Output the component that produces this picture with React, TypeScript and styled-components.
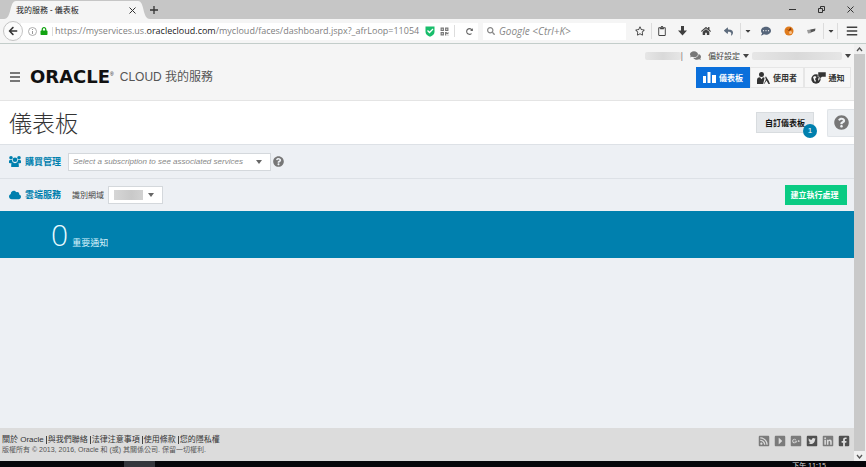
import React from 'react';
import styled, { createGlobalStyle, css } from 'styled-components';
import {
  FaArrowLeft, FaLock, FaRedoAlt, FaSearch, FaRegStar, FaRegClipboard, FaHome,
  FaReply, FaCommentDots, FaComments, FaCloud, FaQuestionCircle, FaBars,
  FaRssSquare, FaCaretSquareRight, FaGooglePlusSquare, FaTwitterSquare, FaLinkedin, FaFacebookSquare,
  FaQrcode, FaCaretDown,
} from 'react-icons/fa';

const cjk = '"Noto Sans CJK TC", sans-serif';

const Global = createGlobalStyle`
  *, *::before, *::after { box-sizing: border-box; }
  body { margin: 0; font: 8px/12px "Liberation Sans", ${cjk}; color: #333; background: #edf0f4; }
  button, input, select { font: inherit; color: inherit; margin: 0; padding: 0; border: 0; background: none; border-radius: 0; }
  button { cursor: pointer; display: inline-flex; align-items: center; justify-content: center; }
  svg { display: block; flex: none; }
  a { color: inherit; text-decoration: none; }
  h1, h2, p { margin: 0; font: inherit; }
`;

const Window = styled.div`
  display: flex;
  flex-direction: column;
  height: 100vh;
  overflow: hidden;
`;

/* ---------- browser chrome ---------- */
const TabStrip = styled.div`
  display: flex;
  height: 19px;
  flex: none;
  padding-left: 4px;
  background: #c6c6c6;
`;
const TabEdge = styled.svg`
  width: 12px;
  height: 19px;
`;
const Tab = styled.div`
  display: flex;
  align-items: center;
  justify-content: space-between;
  width: 122px;
  padding-right: 2px;
  margin-top: 1px;
  background: #f5f5f5;
  color: #222;
  font-family: "Noto Sans", ${cjk};
  white-space: nowrap;
`;
const ChromeButton = styled.button<{ $w: number }>`
  width: ${(p) => p.$w}px;
  height: 19px;
  color: #333;
`;
const WindowButtons = styled.div`
  display: flex;
  margin-left: auto;
  padding-right: 1px;
`;
const Toolbar = styled.div`
  display: flex;
  align-items: center;
  height: 25px;
  flex: none;
  background: #f5f5f5;
  border-bottom: 1px solid #c3cdca;
`;
const BackButton = styled.button`
  z-index: 1;
  width: 20px;
  height: 20px;
  margin: 0 -2px 0 3px;
  border: 1px solid #c4c4c4;
  border-radius: 50%;
  background: #fbfbfb;
  color: #333;
`;
const AddressBar = styled.div`
  display: flex;
  align-items: center;
  flex: 1;
  min-width: 0;
  height: 17px;
  padding-left: 7px;
  background: #fff;
`;
const SiteIcons = styled.div`
  display: flex;
  align-items: center;
  gap: 3px;
  width: 25px;
  flex: none;
  border-right: 1px solid #ddd;
`;
const Url = styled.p`
  flex: 1;
  min-width: 0;
  padding-left: 2px;
  margin-right: 4px;
  overflow: hidden;
  white-space: nowrap;
  font: 9px/16px "Open Sans", "Noto Sans", sans-serif;
  color: #808080;
  b { font-weight: 400; color: #222; }
`;
const AddressActions = styled.div`
  display: flex;
  align-items: center;
  gap: 5px;
  color: #777;
`;
const Rule = styled.span`
  width: 1px;
  height: 12px;
  background: #ddd;
`;
const SearchBox = styled.label`
  display: flex;
  align-items: center;
  gap: 4px;
  width: 143px;
  height: 17px;
  margin: 0 2px 0 5px;
  padding-left: 4px;
  background: #fff;
  color: #888;
  input {
    flex: 1;
    min-width: 0;
    outline: 0;
    font: italic 10px/16px "Open Sans", "Noto Sans", sans-serif;
  }
  input::placeholder { color: #888; opacity: 1; }
`;
const Tool = styled.button<{ $w?: number; $rule?: boolean; $color?: string }>`
  width: ${(p) => p.$w ?? 23}px;
  height: 16px;
  flex: none;
  color: ${(p) => p.$color ?? '#404040'};
  ${(p) => p.$rule && css`border-left: 1px solid #dcdcdc;`}
`;

/* ---------- page ---------- */
const Viewport = styled.div`
  display: flex;
  flex: 1;
  min-height: 0;
`;
const Page = styled.div`
  display: flex;
  flex-direction: column;
  flex: 1;
  min-width: 0;
  background: #edf0f4;
`;
const ScrollTrack = styled.div`
  display: flex;
  flex-direction: column;
  width: 12px;
  flex: none;
  padding-right: 1px;
  background: #f0f0f0;
  color: #555;
  button { height: 10px; }
`;
const ScrollThumb = styled.div`
  flex: 1;
  background: #c9c9c9;
`;
const Header = styled.header`
  flex: none;
  height: 57px;
  padding: 0 3px 0 9px;
  background: #f5f5f5;
  border-bottom: 1px solid #e4e4e4;
`;
const Utility = styled.div`
  display: flex;
  align-items: center;
  justify-content: flex-end;
  gap: 3px;
  height: 23px;
  font-family: ${cjk};
  color: #444;
`;
const Account = styled.span`
  display: flex;
  align-items: center;
  margin-right: 4px;
`;
const UtilityButton = styled.button`
  gap: 3px;
`;
const ChatButton = styled.button`
  margin-right: 4px;
  color: #777;
`;
const Smudge = styled.span<{ $w: number }>`
  width: ${(p) => p.$w}px;
  height: 8px;
  border-radius: 2px;
  background: linear-gradient(90deg, #e6e6e6, #d9d9d9 50%, #e6e6e6);
`;
const Masthead = styled.div`
  display: flex;
  align-items: center;
  justify-content: space-between;
  height: 21px;
`;
const Brand = styled.div`
  display: flex;
  align-items: center;
  padding-bottom: 2px;
  white-space: nowrap;
  font: 12px/20px "Liberation Sans", ${cjk};
  color: #555;
`;
const MenuButton = styled.button`
  width: 11px;
  height: 16px;
  margin-right: 10px;
  color: #777;
`;
const Logo = styled.span`
  margin-right: 6px;
  font: 700 18px/20px "DejaVu Sans", sans-serif;
  color: #111;
  sup { font: 5px/5px "Liberation Sans", sans-serif; vertical-align: 7px; }
`;
const Nav = styled.nav`
  display: flex;
`;
const NavLink = styled.a<{ $active?: boolean; $w: number }>`
  display: flex;
  align-items: center;
  justify-content: center;
  gap: 3px;
  width: ${(p) => p.$w}px;
  height: 21px;
  border: 1px solid ${(p) => (p.$active ? '#0a6fdb' : '#e6e6e6')};
  background: ${(p) => (p.$active ? '#0a6fdb' : '#f7f7f7')};
  color: ${(p) => (p.$active ? '#fff' : '#333')};
  font-family: ${cjk};
  font-weight: 700;
`;
const TitleBar = styled.div`
  display: flex;
  align-items: center;
  flex: none;
  height: 43px;
  padding-left: 9px;
  background: #fff;
  h1 { flex: 1; padding-bottom: 2px; font: 300 23px/32px ${cjk}; color: #333; }
`;
const Customize = styled.button`
  position: relative;
  width: 58px;
  height: 21px;
  margin-right: 13px;
  background: #e6e9ec;
  border: 1px solid #d8dcdf;
  color: #111;
  font: 700 8px/12px ${cjk};
`;
const Badge = styled.span`
  position: absolute;
  right: -4px;
  bottom: -6px;
  width: 14px;
  height: 14px;
  border-radius: 50%;
  background: #0080ae;
  color: #fff;
  font: 8px/14px "Liberation Sans", sans-serif;
`;
const HelpPanel = styled.button`
  width: 27px;
  height: 28px;
  background: #edf0f3;
  border: 1px solid #e0e4e8;
  border-right: 0;
  border-radius: 2px 0 0 2px;
  color: #777;
`;
const FilterRow = styled.section<{ $h: number }>`
  display: flex;
  align-items: center;
  flex: none;
  height: ${(p) => p.$h}px;
  padding: 0 7px 0 9px;
  border-top: 1px solid #dde1e6;
  font-family: ${cjk};
`;
const RowTitle = styled.h2`
  display: flex;
  align-items: center;
  gap: 4px;
  margin-right: 7px;
  color: #0080ae;
  font: 700 9px/14px ${cjk};
`;
const FieldLabel = styled.label`
  margin: 0 4px;
  color: #444;
`;
const SelectBox = styled.div<{ $w: number }>`
  display: grid;
  align-items: center;
  width: ${(p) => p.$w}px;
  height: 18px;
  background: #fff;
  border: 1px solid #d4d8dc;
  color: #666;
  > * { grid-area: 1 / 1; }
  > svg { justify-self: end; margin-right: 8px; pointer-events: none; }
  select {
    appearance: none;
    width: 100%;
    height: 16px;
    padding-left: 4px;
    outline: 0;
    color: #888;
    font: italic 8px/14px "Liberation Sans", sans-serif;
  }
`;
const Redacted = styled.span`
  width: 29px;
  height: 10px;
  margin-left: 5px;
  background: linear-gradient(90deg, #d6d6d6, #c9c9c9 60%, #d2d2d2);
  pointer-events: none;
`;
const HelpButton = styled.button`
  margin-left: 2px;
  color: #777;
`;
const CreateButton = styled.button`
  width: 62px;
  height: 20px;
  margin-left: auto;
  padding-right: 3px;
  background: #0acb83;
  color: #fff;
  font: 700 8px/12px ${cjk};
`;
const Notice = styled.section`
  display: flex;
  align-items: baseline;
  gap: 4px;
  flex: none;
  height: 47px;
  padding-left: 51px;
  background: #0080ae;
  color: #d9f3fc;
  font: 9px/47px ${cjk};
  strong { font: 300 30px/47px "Open Sans", sans-serif; color: #e8fbff; }
`;
const Footer = styled.footer`
  display: flex;
  justify-content: space-between;
  flex: none;
  height: 33px;
  margin-top: auto;
  padding: 6px 4px 0 2px;
  background: #dcdcdc;
  color: #444;
`;
const FooterLinks = styled.p`
  display: flex;
  line-height: 11px;
  color: #333;
`;
const FooterLink = styled.a`
  & + & {
    margin-left: 2px;
    padding-left: 2px;
    background: linear-gradient(#444, #444) left center / 1px 8px no-repeat;
  }
`;
const Copyright = styled.p`
  font-size: 7px;
  line-height: 9px;
  color: #555;
`;
const Social = styled.div`
  display: flex;
  gap: 4px;
  padding-top: 1px;
`;
const SocialLink = styled.a<{ $dark?: boolean }>`
  color: ${(p) => (p.$dark ? '#505050' : '#7b7b7b')};
`;
const Taskbar = styled.div`
  display: flex;
  justify-content: space-between;
  height: 6px;
  flex: none;
  padding: 0 40px 0 124px;
  overflow: hidden;
  background: #06060a;
  color: #ddd;
`;
const TaskItem = styled.span`
  width: 31px;
  background: #34363c;
`;
const Clock = styled.span`
  font: 7px/10px "Noto Sans", ${cjk};
`;

const Caret = () => (
  <svg width="6" height="4" viewBox="0 0 6 4" aria-hidden="true"><path d="M0 0h6L3 4z" fill="currentColor" /></svg>
);
const Chevron = ({ up }: { up?: boolean }) => (
  <svg width="7" height="5" viewBox="0 0 7 5" fill="none" stroke="currentColor" strokeWidth="1.3" aria-hidden="true">
    <path d={up ? 'M1 4l2.5-3L6 4' : 'M1 1l2.5 3L6 1'} />
  </svg>
);
const Shield = () => (
  <svg width="10" height="11" viewBox="0 0 10 11" aria-hidden="true">
    <path d="M.5.5h9V6C9.500 8.500 7 10 5 10.700 3 10 .5 8.500.5 6z" fill="#18bd6b" />
    <path d="M2.500 4.500 4.500 6.500 8 3" fill="none" stroke="#fff" strokeWidth="1.300" />
  </svg>
);
const Download = () => (
  <svg width="9" height="10" viewBox="0 0 9 10" fill="currentColor" aria-hidden="true">
    <path d="M3 0h3v4.500h3L4.500 9.500 0 4.500h3z" />
  </svg>
);
const Bars = () => (
  <svg width="13" height="11" viewBox="0 0 13 11" fill="currentColor" aria-hidden="true">
    <path d="M0 4h3v7H0zM4.500 0h3v11h-3zM9 3h4v8H9z" />
  </svg>
);
const Group = () => (
  <svg width="12" height="11" viewBox="0 0 12 11" fill="currentColor" aria-hidden="true">
    <circle cx="2" cy="1.800" r="1.800" />
    <circle cx="10" cy="1.800" r="1.800" />
    <circle cx="6" cy="3.800" r="2.300" />
    <path d="M0 7V5.200C0 4.300.6 4 1.500 4h1.600c0 1.200.5 2 1.200 2.700L3 7.500zM12 7V5.200C12 4.300 11.400 4 10.500 4H8.900c0 1.200-.5 2-1.200 2.700L9 7.500z" />
    <path d="M2.200 11V8.800c0-1.400 1-2.200 2.200-2.200.9.700 2.300.7 3.200 0 1.200 0 2.200.8 2.200 2.200V11z" />
  </svg>
);
const UserEdit = () => (
  <svg width="13" height="12" viewBox="0 0 13 12" fill="currentColor" aria-hidden="true">
    <circle cx="4.500" cy="2.500" r="2.500" />
    <path d="M0 12V8c0-2 1.500-2.700 3-2.700l1.500 2 1.500-2c.7 0 1.200.2 1.600.5L6.200 12z" />
    <path d="M9 4.500 11.800 9 13 12h-1.500L9.500 8.500 7.200 12H6.800L8.900 7.400 8.200 5z" />
  </svg>
);
const GlobeFlag = () => (
  <svg width="15" height="12" viewBox="0 0 15 12" aria-hidden="true">
    <circle cx="5" cy="7" r="4.700" fill="#333" />
    <path d="M2 5l2-1 1.500 1L4 7l1 2-1 1-1-2zM7 6l1.500 1-1 2z" fill="#f7f7f7" />
    <path d="M7 0h8v5h-4L8.500 7V5H7z" fill="#333" stroke="#f7f7f7" strokeWidth=".5" />
  </svg>
);
const Restore = () => (
  <svg width="7" height="7" viewBox="0 0 7 7" fill="none" stroke="currentColor" aria-hidden="true">
    <path d="M.5 2.500h4v4h-4zM2.500 2V.5h4v4H5" />
  </svg>
);
const Cross = ({ size }: { size: number }) => (
  <svg width={size} height={size} viewBox="0 0 7 7" stroke="currentColor" aria-hidden="true"><path d="M.5.5l6 6M6.500.5l-6 6" /></svg>
);
const Fox = () => (
  <svg width="10" height="10" viewBox="0 0 10 10" aria-hidden="true">
    <circle cx="5" cy="5" r="4.500" fill="#e07b1c" />
    <path d="M1.500 2.500l3 1.500 2-2.500 1 2-2.500 1.500z" fill="#8a3d0c" />
    <circle cx="6.500" cy="6.500" r="1.500" fill="#f6c08a" />
  </svg>
);
const Pen = () => (
  <svg width="9" height="6" viewBox="0 0 9 6" aria-hidden="true">
    <path d="M0 2l4-.5V5L1 5.500z" fill="#999" /><path d="M3.500 1.500 8.500.5 8 3 4 4.500z" fill="#555" />
  </svg>
);

const links = ['關於 Oracle', '與我們聯絡', '法律注意事項', '使用條款', '您的隱私權'];
const social = [
  { name: 'RSS', Icon: FaRssSquare },
  { name: 'YouTube', Icon: FaCaretSquareRight },
  { name: 'Google+', Icon: FaGooglePlusSquare },
  { name: 'Twitter', Icon: FaTwitterSquare, dark: true },
  { name: 'LinkedIn', Icon: FaLinkedin },
  { name: 'Facebook', Icon: FaFacebookSquare, dark: true },
];

export default function App() {
  return (
    <Window>
      <Global />
      <TabStrip>
        <TabEdge viewBox="0 0 12 19" aria-hidden="true">
          <path d="M0 19C8 19 5 1 12 1v18z" fill="#f5f5f5" />
        </TabEdge>
        <Tab>
          <span>我的服務 - 儀表板</span>
          <ChromeButton $w={8} aria-label="關閉分頁"><Cross size={7} /></ChromeButton>
        </Tab>
        <TabEdge viewBox="0 0 12 19" aria-hidden="true">
          <path d="M12 19C4 19 7 1 0 1v18z" fill="#f5f5f5" />
        </TabEdge>
        <ChromeButton $w={8} aria-label="新增分頁">
          <svg width="8" height="8" viewBox="0 0 8 8" stroke="currentColor" strokeWidth="1.300"><path d="M0 4h8M4 0v8" /></svg>
        </ChromeButton>
        <WindowButtons>
          <ChromeButton $w={29} aria-label="最小化">
            <svg width="7" height="7" viewBox="0 0 7 7" stroke="currentColor"><path d="M0 3.500h7" /></svg>
          </ChromeButton>
          <ChromeButton $w={29} aria-label="還原"><Restore /></ChromeButton>
          <ChromeButton $w={29} aria-label="關閉"><Cross size={7} /></ChromeButton>
        </WindowButtons>
      </TabStrip>

      <Toolbar>
        <BackButton aria-label="上一頁"><FaArrowLeft size={10} /></BackButton>
        <AddressBar>
          <SiteIcons>
            <svg width="9" height="9" viewBox="0 0 9 9" fill="none" stroke="#999" aria-hidden="true">
              <circle cx="4.500" cy="4.500" r="4" strokeWidth=".8" /><path d="M4.500 4v3M4.500 2v1" />
            </svg>
            <FaLock size={8} color="#12a312" />
          </SiteIcons>
          <Url>https://myservices.us.<b>oraclecloud.com</b>/mycloud/faces/dashboard.jspx?_afrLoop=11054</Url>
          <AddressActions>
            <Shield />
            <FaQrcode size={9} />
            <Rule />
            <Tool $w={18} aria-label="重新載入" $color="#666"><FaRedoAlt size={7} /></Tool>
          </AddressActions>
        </AddressBar>
        <SearchBox>
          <FaSearch size={8} />
          <input type="text" placeholder="Google <Ctrl+K>" aria-label="搜尋" />
        </SearchBox>
        <Tool aria-label="書籤"><FaRegStar size={10} /></Tool>
        <Tool $w={20} $rule aria-label="剪貼簿"><FaRegClipboard size={10} /></Tool>
        <Tool aria-label="下載"><Download /></Tool>
        <Tool aria-label="首頁"><FaHome size={10} /></Tool>
        <Tool aria-label="復原" $color="#5d6b7c"><FaReply size={9} /></Tool>
        <Tool $w={14} $rule aria-label="更多"><FaCaretDown size={8} /></Tool>
        <Tool aria-label="交談" $color="#56657a"><FaCommentDots size={10} /></Tool>
        <Tool aria-label="附加元件"><Fox /></Tool>
        <Tool aria-label="工具"><Pen /></Tool>
        <Tool $w={14} $rule aria-label="更多工具"><FaCaretDown size={8} /></Tool>
        <Tool $w={29} $rule aria-label="選單"><FaBars size={12} /></Tool>
      </Toolbar>

      <Viewport>
        <Page>
          <Header>
            <Utility>
              <Account><Smudge $w={36} />|</Account>
              <ChatButton aria-label="交談"><FaComments size={11} /></ChatButton>
              <UtilityButton>偏好設定 <Caret /></UtilityButton>
              <UtilityButton aria-label="帳戶"><Smudge $w={90} /><Caret /></UtilityButton>
            </Utility>
            <Masthead>
              <Brand>
                <MenuButton aria-label="主選單">
                  <svg width="10" height="10" viewBox="0 0 10 10" fill="currentColor"><path d="M0 0h10v2H0zM0 4h10v2H0zM0 8h10v2H0z" /></svg>
                </MenuButton>
                <Logo>ORACLE<sup>®</sup></Logo>
                <span>CLOUD 我的服務</span>
              </Brand>
              <Nav>
                <NavLink href="#dashboard" $active $w={54}><Bars />儀表板</NavLink>
                <NavLink href="#users" $w={54}><UserEdit />使用者</NavLink>
                <NavLink href="#notices" $w={47}><GlobeFlag />通知</NavLink>
              </Nav>
            </Masthead>
          </Header>

          <TitleBar>
            <h1>儀表板</h1>
            <Customize>自訂儀表板<Badge>1</Badge></Customize>
            <HelpPanel aria-label="說明"><FaQuestionCircle size={15} /></HelpPanel>
          </TitleBar>

          <FilterRow $h={34}>
            <RowTitle><Group />購買管理</RowTitle>
            <SelectBox $w={203}>
              <select aria-label="購買管理"><option>Select a subscription to see associated services</option></select>
              <Caret />
            </SelectBox>
            <HelpButton aria-label="購買管理說明"><FaQuestionCircle size={11} /></HelpButton>
          </FilterRow>
          <FilterRow $h={33}>
            <RowTitle><FaCloud size={12} />雲端服務</RowTitle>
            <FieldLabel htmlFor="domain">識別網域</FieldLabel>
            <SelectBox $w={55}>
              <select id="domain"><option></option></select>
              <Redacted />
              <Caret />
            </SelectBox>
            <CreateButton>建立執行處理</CreateButton>
          </FilterRow>

          <Notice><strong>0</strong>重要通知</Notice>

          <Footer>
            <div>
              <FooterLinks>
                {links.map((label) => (
                  <FooterLink key={label} href="#about">{label}</FooterLink>
                ))}
              </FooterLinks>
              <Copyright>版權所有 © 2013, 2016, Oracle 和 (或) 其關係公司. 保留一切權利.</Copyright>
            </div>
            <Social>
              {social.map(({ name, Icon, dark }) => (
                <SocialLink key={name} href="#social" aria-label={name} $dark={dark}><Icon size={12} /></SocialLink>
              ))}
            </Social>
          </Footer>
        </Page>
        <ScrollTrack>
          <button aria-label="向上捲動"><Chevron up /></button>
          <ScrollThumb />
          <button aria-label="向下捲動"><Chevron /></button>
        </ScrollTrack>
      </Viewport>

      <Taskbar>
        <TaskItem />
        <Clock>下午 11:15</Clock>
      </Taskbar>
    </Window>
  );
}
